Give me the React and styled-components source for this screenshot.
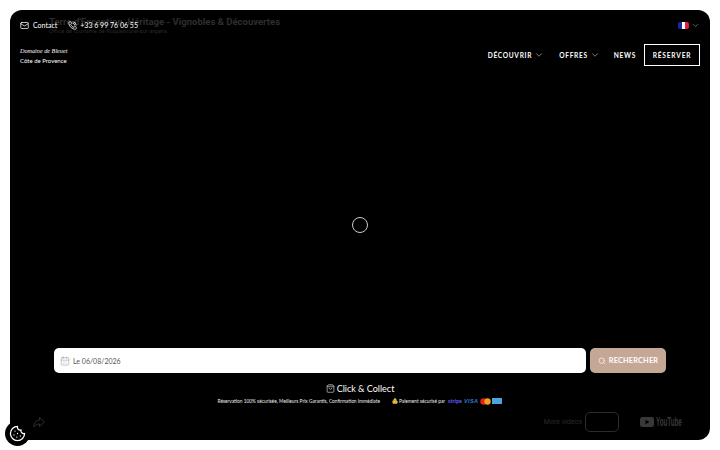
import styled, { createGlobalStyle, keyframes } from "styled-components";
import { Mail, PhoneCall, ChevronDown, CalendarDays, Search, ShoppingBag, Cookie, Lock } from "lucide-react";

const GlobalStyle = createGlobalStyle`
  html, body {
    margin: 0;
    background: #fff;
    font-family: "Lato", "Liberation Sans", sans-serif;
  }
`;

const Frame = styled.div`
  position: relative;
  box-sizing: border-box;
  width: 700px;
  height: 430px;
  margin: 10px;
  background: #000;
  border-radius: 12px;
  color: #fff;
  display: flex;
  flex-direction: column;
`;

const VideoTitle = styled.div`
  position: absolute;
  left: 39px;
  top: 6px;
  color: #2e2e2e;
`;

const TitleLine = styled.div`
  font: bold 9.5px "Roboto", sans-serif;
  line-height: 12px;
`;

const SubLine = styled.div`
  font: 5.9px "Roboto", sans-serif;
  line-height: 7px;
  color: #282828;
`;

const TopBar = styled.div`
  position: relative;
  display: flex;
  align-items: center;
  height: 14px;
  margin-top: 8px;
  padding: 0 10px 0 10px;
  font-size: 7px;
`;

const TopLink = styled.span`
  display: flex;
  align-items: center;
  gap: ${(p) => p.$gap}px;
  margin-right: 11px;
`;

const Flag = styled.span`
  display: flex;
  width: 11px;
  height: 7px;
  margin-left: auto;
  margin-right: 2px;
  border-radius: 2px;
  overflow: hidden;
`;

const Stripe = styled.i`
  flex: 1;
  background: ${(p) => p.$color};
`;

const NavBar = styled.div`
  position: relative;
  display: flex;
  align-items: center;
  height: 22px;
  margin-top: 12px;
  padding: 0 10px;
`;

const Logo = styled.div`
  display: flex;
  flex-direction: column;
  gap: 2px;
  margin-right: auto;
`;

const LogoScript = styled.span`
  font: italic 6.2px/9px "Liberation Serif", serif;
`;

const LogoPlace = styled.span`
  font-size: 6px;
  line-height: 8px;
`;

const NavItem = styled.span`
  display: flex;
  align-items: center;
  gap: 2px;
  margin-right: ${(p) => p.$mr}px;
  font-size: 6.6px;
  font-weight: 700;
  letter-spacing: 0.7px;
`;

const BookButton = styled.span`
  display: flex;
  align-items: center;
  justify-content: center;
  box-sizing: border-box;
  width: 56px;
  height: 22px;
  border: 1px solid #fff;
  font-size: 6.6px;
  font-weight: 700;
  letter-spacing: 0.8px;
`;

const Stage = styled.div`
  flex: 1;
  display: flex;
  align-items: center;
  justify-content: center;
  padding-top: 35px;
`;

const spin = keyframes`
  to { transform: rotate(360deg); }
`;

const Spinner = styled.div`
  box-sizing: border-box;
  width: 16px;
  height: 16px;
  border: 1px solid #ccc;
  border-radius: 50%;
  animation: ${spin} 1s linear infinite;
`;

const SearchRow = styled.div`
  display: flex;
  gap: 4px;
  height: 25px;
  padding: 0 44px;
`;

const DateField = styled.div`
  flex: 1;
  display: flex;
  align-items: center;
  gap: 3px;
  padding-left: 6px;
  background: #fff;
  border-radius: 5px;
  color: #555;
  font-size: 7px;
`;

const SearchButton = styled.div`
  display: flex;
  align-items: center;
  justify-content: center;
  gap: 3px;
  width: 76px;
  background: #c4a794;
  border-radius: 5px;
  font-size: 7.3px;
  font-weight: 700;
  letter-spacing: 0.2px;
`;

const Collect = styled.div`
  display: flex;
  align-items: center;
  justify-content: center;
  gap: 2px;
  height: 12px;
  margin-top: 9px;
  font-size: 9px;
`;

const Assurance = styled.div`
  display: flex;
  align-items: center;
  justify-content: center;
  height: 8px;
  margin-top: 3px;
  font-size: 4.8px;
  color: #eee;
`;

const Secure = styled.span`
  display: flex;
  align-items: center;
  gap: 1px;
  margin-left: 12px;
`;

const StripeMark = styled.b`
  margin-left: 2px;
  color: #635bff;
  font-size: 5.5px;
`;

const VisaMark = styled.b`
  margin: 0 1px;
  color: #2b7fd0;
  font: italic bold 5.5px "Liberation Sans", sans-serif;
  letter-spacing: 0.4px;
`;

const Amex = styled.span`
  width: 10px;
  height: 6px;
  background: #4da3dc;
`;

const BottomBar = styled.div`
  display: flex;
  align-items: center;
  height: 20px;
  margin-top: 7px;
  margin-bottom: 8px;
  padding: 0 28px 0 23px;
  color: #2e2e2e;
`;

const MoreText = styled.span`
  margin-left: auto;
  font: 7px "Roboto", sans-serif;
  color: #2b2b2b;
`;

const MoreBox = styled.span`
  box-sizing: border-box;
  width: 34px;
  height: 20px;
  margin-left: 3px;
  margin-right: 21px;
  border: 1px solid #2c2c2c;
  border-radius: 5px;
`;

const YouTubeMark = styled.span`
  display: flex;
  align-items: center;
  gap: 2px;
  color: #383838;
`;

const YouTubeWord = styled.span`
  width: 26px;
  font: bold 12px "Liberation Sans", sans-serif;
  transform: scaleX(0.52);
  transform-origin: left center;
`;

const CookieButton = styled.div`
  position: fixed;
  left: 5px;
  top: 421px;
  display: flex;
  align-items: center;
  justify-content: center;
  width: 25px;
  height: 25px;
  border-radius: 50%;
  background: #000;
  color: #fff;
`;

const ShareIcon = () => (
  <svg width="12" height="12" viewBox="0 0 12 12" fill="none" stroke="currentColor">
    <path d="M6.5 1.5l5 4.5-5 4.5V8C4 8 2 9 .8 11c0-4 2-6.5 5.7-7z" strokeLinejoin="round" />
  </svg>
);

const MasterCard = () => (
  <svg width="11" height="7" viewBox="0 0 11 7">
    <circle cx="3.5" cy="3.5" r="3.2" fill="#e2231a" />
    <circle cx="7.5" cy="3.5" r="3.2" fill="#f79e1b" />
  </svg>
);

const YouTubeIcon = () => (
  <svg width="14" height="10" viewBox="0 0 14 10">
    <rect width="14" height="10" rx="2.5" fill="#383838" />
    <path d="M5.5 2.8v4.4L9.3 5z" fill="#000" />
  </svg>
);

export default function App() {
  return (
    <>
      <GlobalStyle />
      <Frame>
        <VideoTitle>
          <TitleLine>Terre d'Exception, Héritage - Vignobles &amp; Découvertes</TitleLine>
          <SubLine>Office de tourisme de Roquebrune-sur-argens</SubLine>
        </VideoTitle>
        <TopBar>
          <TopLink $gap={4}>
            <Mail size={9} />
            Contact
          </TopLink>
          <TopLink $gap={3}>
            <PhoneCall size={9} />
            +33 6 99 76 06 55
          </TopLink>
          <Flag>
            <Stripe $color="#1a2a9c" />
            <Stripe $color="#fff" />
            <Stripe $color="#e0223a" />
          </Flag>
          <ChevronDown size={9} color="#aaa" strokeWidth={1.5} />
        </TopBar>
        <NavBar>
          <Logo>
            <LogoScript>Domaine de Bleuet</LogoScript>
            <LogoPlace>Côte de Provence</LogoPlace>
          </Logo>
          <NavItem $mr={15}>
            DÉCOUVRIR <ChevronDown size={10} strokeWidth={1.2} />
          </NavItem>
          <NavItem $mr={14}>
            OFFRES <ChevronDown size={10} strokeWidth={1.2} />
          </NavItem>
          <NavItem $mr={8}>NEWS</NavItem>
          <BookButton>RÉSERVER</BookButton>
        </NavBar>
        <Stage>
          <Spinner />
        </Stage>
        <SearchRow>
          <DateField>
            <CalendarDays size={10} color="#999" strokeWidth={1.3} />
            Le 06/08/2026
          </DateField>
          <SearchButton>
            <Search size={8} />
            RECHERCHER
          </SearchButton>
        </SearchRow>
        <Collect>
          <ShoppingBag size={9} strokeWidth={1.5} />
          Click &amp; Collect
        </Collect>
        <Assurance>
          Réservation 100% sécurisée, Meilleurs Prix Garantis, Confirmation Immédiate
          <Secure>
            <Lock size={6} color="#e8b93a" fill="#e8b93a" />
            Paiement sécurisé par
            <StripeMark>stripe</StripeMark>
            <VisaMark>VISA</VisaMark>
            <MasterCard />
            <Amex />
          </Secure>
        </Assurance>
        <BottomBar>
          <ShareIcon />
          <MoreText>More videos</MoreText>
          <MoreBox />
          <YouTubeMark>
            <YouTubeIcon />
            <YouTubeWord>YouTube</YouTubeWord>
          </YouTubeMark>
        </BottomBar>
      </Frame>
      <CookieButton>
        <Cookie size={17} strokeWidth={1.8} />
      </CookieButton>
    </>
  );
}
